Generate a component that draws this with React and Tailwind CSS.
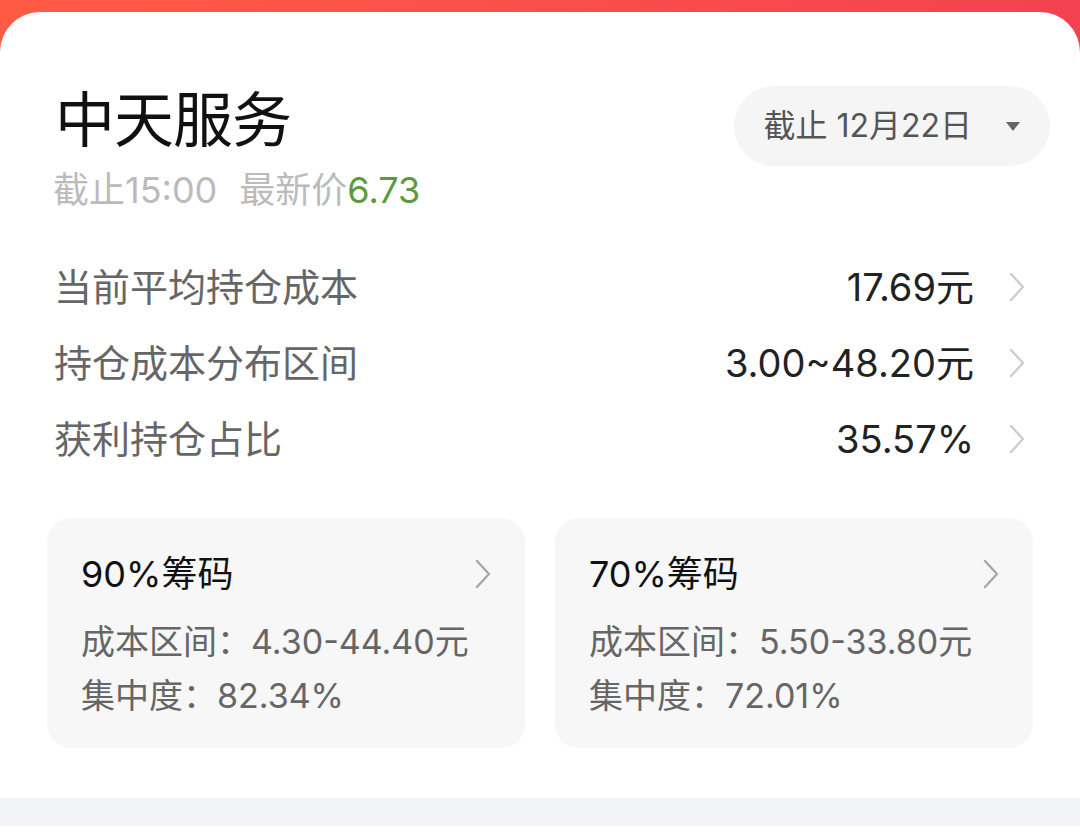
import React from "react";

const FONT = { fontFamily: 'Inter, "Noto Sans CJK SC", sans-serif' };

function Chevron({ className = "", color = "#cccccc" }) {
  return (
    <svg width="18" height="32" viewBox="0 0 18 32" className={className}>
      <path d="M3 3 L15 16 L3 29" fill="none" stroke={color} strokeWidth="2.4" strokeLinecap="round" strokeLinejoin="round" />
    </svg>
  );
}

function Row({ label, value }) {
  return (
    <div className="h-[76px] flex items-center">
      <div className="flex-1 text-[38px] leading-[44px] text-[#666666]">{label}</div>
      <div className="text-[38px] leading-[44px] text-[#222222]">{value}</div>
      <Chevron className="ml-[34px] mr-[54px]" />
    </div>
  );
}

function ChipCard({ title, range, conc }) {
  return (
    <div className="w-[478px] h-[230px] rounded-[24px] bg-[#f7f7f7] pl-[34px] pr-[33px] pt-[34px]">
      <div className="flex items-center justify-between h-[44px]">
        <div className="text-[36px] leading-[44px] text-[#111111]">{title}</div>
        <Chevron color="#a8a8a8" />
      </div>
      <div className="mt-[22px] text-[34px] leading-[48px] text-[#666666]">成本区间：{range}</div>
      <div className="mt-[6px] text-[34px] leading-[48px] text-[#666666]">集中度：{conc}</div>
    </div>
  );
}

export default function App() {
  return (
    <div style={FONT} className="w-[1080px] h-[837px] overflow-hidden bg-gradient-to-r from-[#ff5b44] to-[#f3424f] flex flex-col">
      <div className="mt-[12px] flex-1 bg-white rounded-t-[40px] flex flex-col">
        <div className="flex justify-between pl-[55px] pr-[30px] pt-[77px]">
          <div>
            <div className="text-[60px] leading-[62px] text-[#111111] tracking-[-1px]">中天服务</div>
            <div className="mt-[18px] -ml-[2px] text-[36px] leading-[42px] text-[#bbbbbb]">
              截止15:00<span className="ml-[22px]">最新价</span><span className="text-[#5b9a3e]">6.73</span>
            </div>
          </div>
          <div className="-mt-[3px] h-[80px] rounded-full bg-[#f5f5f5] flex items-center pl-[29px] pr-[29px]">
            <span className="text-[32px] leading-[40px] text-[#555555]">截止 12月22日</span>
            <svg width="16" height="11" viewBox="0 0 16 11" className="ml-[33px]">
              <path d="M1 1 L15 1 L8 10 Z" fill="#666666" />
            </svg>
          </div>
        </div>

        <div className="mt-[38px] pl-[54px]">
          <Row label="当前平均持仓成本" value="17.69元" />
          <Row label="持仓成本分布区间" value="3.00~48.20元" />
          <Row label="获利持仓占比" value="35.57%" />
        </div>

        <div className="mt-[41px] px-[47px] flex gap-[30px]">
          <ChipCard title="90%筹码" range="4.30-44.40元" conc="82.34%" />
          <ChipCard title="70%筹码" range="5.50-33.80元" conc="72.01%" />
        </div>

        <div className="mt-[50px] h-[28px] bg-[#f3f4f7]" />
        <div className="flex-1 bg-white" />
      </div>
    </div>
  );
}
